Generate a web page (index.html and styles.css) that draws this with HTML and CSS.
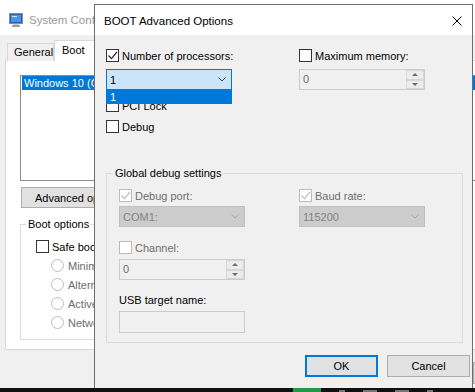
FILE: index.html
```html
<!DOCTYPE html>
<html lang="en">
<head>
    <meta charset="UTF-8">
    <meta name="viewport" content="width=device-width, initial-scale=1.0">
    <title>BOOT Advanced Options</title>
    <link rel="stylesheet" href="styles.css">
</head>
<body>
    <div class="desktop">
        <!-- System Configuration window, behind the dialog -->
        <div class="sysconfig">
            <div class="sc-title">
                <svg class="sc-icon" width="16" height="16" viewBox="0 0 16 16">
                    <rect x="1.5" y="1.5" width="13" height="10" fill="#1f5fc4" stroke="#8c8c8c"/>
                    <rect x="3" y="3" width="10" height="7" fill="#4a94ea"/>
                    <path d="M4 4.5h5" stroke="#cfe4fb" stroke-width="1"/>
                    <path d="M5 12.5h6l1.5 2.5h-9z" fill="#9c9c9c"/>
                </svg>
                <span>System Configuration</span>
            </div>
            <div class="sc-tabs">
                <div class="tab">General</div>
                <div class="tab active">Boot</div>
            </div>
            <div class="tab-panel">
                <div class="os-list">
                    <div class="os-item">Windows 10 (C:\WINDOWS) : Current OS; Default OS</div>
                </div>
                <button class="btn adv-btn">Advanced options...</button>
                <fieldset class="group boot-opts">
                    <legend>Boot options</legend>
                    <label class="check"><span class="box"></span>Safe boot</label>
                    <div class="radios">
                        <label class="radio"><span class="dot"></span>Minimal</label>
                        <label class="radio"><span class="dot"></span>Alternate shell</label>
                        <label class="radio"><span class="dot"></span>Active Directory repair</label>
                        <label class="radio"><span class="dot"></span>Network</label>
                    </div>
                </fieldset>
            </div>
            <div class="sc-footer">
                <button class="btn ghost"></button>
            </div>
        </div>

        <!-- BOOT Advanced Options dialog -->
        <div class="dialog">
            <div class="dlg-title">
                <span>BOOT Advanced Options</span>
                <svg class="close" width="10" height="10" viewBox="0 0 10 10">
                    <path d="M0.5 0.5l9 9M9.5 0.5l-9 9" stroke="#000" stroke-width="1"/>
                </svg>
            </div>
            <div class="dlg-body">
                <div class="cols">
                    <div class="col">
                        <label class="check">
                            <span class="box"><svg width="11" height="11" viewBox="0 0 11 11"><path d="M1.5 5.5l3 3.2L10 1.8" fill="none" stroke="currentColor" stroke-width="1.2"/></svg></span>
                            Number of processors:
                        </label>
                        <div class="select-wrap">
                            <div class="select open">
                                <span>1</span>
                                <svg width="8" height="5" viewBox="0 0 8 5"><path d="M0.5 0.5L4 4 7.5 0.5" fill="none" stroke="#444" stroke-width="1"/></svg>
                            </div>
                            <div class="dropdown-list">
                                <div class="dd-item">1</div>
                            </div>
                        </div>
                        <label class="check pci"><span class="box"></span>PCI Lock</label>
                        <label class="check debug"><span class="box"></span>Debug</label>
                    </div>
                    <div class="col">
                        <label class="check"><span class="box"></span>Maximum memory:</label>
                        <div class="spin top-spin">
                            <span class="spin-val">0</span>
                            <span class="spin-btns"><span class="up"></span><span class="down"></span></span>
                        </div>
                    </div>
                </div>

                <fieldset class="group debug-group">
                    <legend>Global debug settings</legend>
                    <div class="cols inner">
                        <div class="col">
                            <label class="check disabled">
                                <span class="box"><svg width="11" height="11" viewBox="0 0 11 11"><path d="M1.5 5.5l3 3.2L10 1.8" fill="none" stroke="currentColor" stroke-width="1.2"/></svg></span>
                                Debug port:
                            </label>
                            <div class="select disabled">
                                <span>COM1:</span>
                                <svg width="8" height="5" viewBox="0 0 8 5"><path d="M0.5 0.5L4 4 7.5 0.5" fill="none" stroke="#a6a6a6" stroke-width="1"/></svg>
                            </div>
                            <label class="check disabled channel"><span class="box"></span>Channel:</label>
                            <div class="spin">
                                <span class="spin-val">0</span>
                                <span class="spin-btns"><span class="up"></span><span class="down"></span></span>
                            </div>
                            <div class="field-label">USB target name:</div>
                            <div class="textbox"></div>
                        </div>
                        <div class="col">
                            <label class="check disabled">
                                <span class="box"><svg width="11" height="11" viewBox="0 0 11 11"><path d="M1.5 5.5l3 3.2L10 1.8" fill="none" stroke="currentColor" stroke-width="1.2"/></svg></span>
                                Baud rate:
                            </label>
                            <div class="select disabled">
                                <span>115200</span>
                                <svg width="8" height="5" viewBox="0 0 8 5"><path d="M0.5 0.5L4 4 7.5 0.5" fill="none" stroke="#a6a6a6" stroke-width="1"/></svg>
                            </div>
                        </div>
                    </div>
                </fieldset>

                <div class="dlg-buttons">
                    <button class="btn default">OK</button>
                    <button class="btn cancel">Cancel</button>
                </div>
            </div>
        </div>

        <div class="taskbar">
            <span class="tb-app"></span>
            <span class="tb-bit"></span>
            <span class="tb-bit wide"></span>
            <span class="tb-bit wide"></span>
            <span class="tb-bit"></span>
        </div>
    </div>
</body>
</html>
```

FILE: styles.css
```css
* {
    margin: 0;
    padding: 0;
    box-sizing: border-box;
}

body {
    font-family: 'Liberation Sans', Arial, sans-serif;
    font-size: 11px;
    color: #000;
    background-color: #101010;
}

.desktop {
    position: relative;
    width: 475px;
    height: 392px;
    overflow: hidden;
    background-color: #101010;
}

/* ---------- background window ---------- */

.sysconfig {
    position: absolute;
    left: 0;
    top: 0;
    width: 560px;
    height: 388px;
    background-color: #f0f0f0;
    z-index: 0;
}

.sc-title {
    height: 35px;
    background-color: #fff;
    display: flex;
    align-items: center;
    gap: 5px;
    padding: 4px 0 0 8px;
    color: #999;
    font-size: 11.5px;
    white-space: nowrap;
}

.sc-tabs {
    display: flex;
    align-items: flex-end;
    height: 26px;
    padding: 5px 0 0 7px;
    position: relative;
    z-index: 1;
}

.tab {
    height: 18px;
    line-height: 16px;
    padding: 0 6px;
    border: 1px solid #d9d9d9;
    border-bottom: none;
    background-color: #f0f0f0;
}

.tab:first-child {
    width: 47px;
}

.tab.active {
    height: 21px;
    line-height: 18px;
    padding-left: 7px;
    width: 46px;
    background-color: #fff;
}

.tab-panel {
    margin: -1px 0 0 5px;
    height: 290px;
    border: 1px solid #d9d9d9;
    background-color: #fff;
    padding: 14px 0 0 14px;
}

.os-list {
    height: 106px;
    border: 1px solid #8c8c8c;
    padding: 0 1px;
}

.os-item {
    height: 14px;
    line-height: 14px;
    padding-left: 2px;
    background-color: #0078d7;
    color: #fff;
    white-space: nowrap;
}

.btn {
    font: inherit;
    color: #000;
    height: 22px;
    border: 1px solid #adadad;
    background-color: #e1e1e1;
}

.adv-btn {
    display: block;
    height: 21px;
    width: 124px;
    margin: 6px 0 0 1px;
    padding-left: 13px;
    text-align: left;
}

.group {
    border: 1px solid #dcdcdc;
    min-width: 0;
}

.group legend {
    padding: 0 2px;
    line-height: 14px;
}

.boot-opts {
    width: 260px;
    margin-top: 9px;
    padding: 9px 0 10px 15px;
}

.boot-opts legend {
    margin-left: -10px;
}

.radios {
    display: flex;
    flex-direction: column;
    gap: 6px;
    margin: 6px 0 0 15px;
}

.radio {
    display: flex;
    align-items: center;
    gap: 4px;
    height: 13px;
    color: #6d6d6d;
    white-space: nowrap;
}

.dot {
    width: 13px;
    height: 13px;
    border: 1px solid #bcbcbc;
    border-radius: 50%;
    background-color: #fff;
    flex: none;
}

.sc-footer {
    display: flex;
    justify-content: flex-end;
    padding: 12px 7px 0 0;
}

.sc-footer .btn.ghost {
    width: 80px;
}

/* ---------- shared controls ---------- */

.check {
    display: flex;
    align-items: center;
    gap: 3px;
    height: 13px;
    white-space: nowrap;
}

.box {
    width: 13px;
    height: 13px;
    flex: none;
    border: 1px solid #333;
    background-color: #fff;
    color: #222;
    display: flex;
}

.check.disabled {
    color: #6d6d6d;
}

.check.disabled .box {
    border-color: #bcbcbc;
    color: #bcbcbc;
}

.select {
    height: 21px;
    border: 1px solid #adadad;
    background-color: #e5e5e5;
    display: flex;
    align-items: center;
    justify-content: space-between;
    padding: 0 5px 0 3px;
}

.select.open {
    border-color: #0078d7;
    background-color: #cce4f7;
}

.select.disabled {
    border-color: #bfbfbf;
    background-color: #cccccc;
    color: #838383;
}

.spin {
    height: 21px;
    display: flex;
    border: 1px solid #cccccc;
    background-color: #f0f0f0;
    color: #6d6d6d;
}

.spin-val {
    flex: 1;
    padding-left: 3px;
    line-height: 19px;
}

.spin-btns {
    width: 18px;
    display: flex;
    flex-direction: column;
}

.spin-btns span {
    flex: 1;
    border: 1px solid #d6d6d6;
    background-color: #ececec;
    display: flex;
    align-items: center;
    justify-content: center;
}

.spin-btns span::before {
    content: "";
    border-left: 3px solid transparent;
    border-right: 3px solid transparent;
}

.spin-btns .up::before {
    border-bottom: 3px solid #6d6d6d;
}

.spin-btns .down::before {
    border-top: 3px solid #6d6d6d;
}

.textbox {
    height: 22px;
    border: 1px solid #cccccc;
    background-color: #f0f0f0;
}

/* ---------- dialog ---------- */

.dialog {
    position: absolute;
    left: 94px;
    top: 4px;
    width: 379px;
    height: 385px;
    border: 1px solid #6e6e6e;
    background-color: #f0f0f0;
    z-index: 1;
}

.dlg-title {
    height: 30px;
    background-color: #fff;
    display: flex;
    align-items: center;
    justify-content: space-between;
    padding: 1px 10px 0 9px;
    font-size: 11.5px;
}

.dlg-body {
    padding: 14px 2px 0 11px;
}

.cols {
    display: grid;
    grid-template-columns: 126px 126px;
    column-gap: 67px;
}

.col {
    display: flex;
    flex-direction: column;
}

.select-wrap {
    position: relative;
    margin-top: 7px;
}

.dropdown-list {
    position: absolute;
    left: 0;
    right: 0;
    top: 100%;
    height: 14px;
    background-color: #0078d7;
    color: #fff;
    z-index: 2;
}

.dd-item {
    line-height: 14px;
    padding-left: 4px;
}

.check.pci {
    margin-top: 9px;
}

.check.debug {
    margin-top: 8px;
}

.top-spin {
    margin-top: 7px;
}

.debug-group {
    width: 357px;
    margin-top: 33px;
    padding: 9px 12px 9px 12px;
}

.debug-group legend {
    margin-left: -6px;
}

.cols.inner {
    column-gap: 54px;
}

.inner .select {
    margin-top: 4px;
}

.check.channel {
    margin-top: 14px;
}

.inner .spin {
    margin-top: 5px;
}

.field-label {
    margin-top: 13px;
    line-height: 14px;
}

.inner .textbox {
    margin-top: 4px;
}

.dlg-buttons {
    display: flex;
    justify-content: flex-end;
    gap: 9px;
    margin-top: 12px;
}

.dlg-buttons .btn {
    width: 73px;
}

.dlg-buttons .btn.default {
    border: 2px solid #0078d7;
}

.dlg-buttons .btn.cancel {
    width: 83px;
}

/* ---------- taskbar strip ---------- */

.taskbar {
    position: absolute;
    left: 0;
    right: 0;
    bottom: 0;
    height: 4px;
    background-color: #101010;
    display: flex;
    align-items: flex-end;
    gap: 18px;
    padding-left: 293px;
    z-index: 3;
}

.tb-app {
    width: 28px;
    height: 4px;
    background-color: #1f9a40;
}

.tb-bit {
    width: 6px;
    height: 2px;
    background-color: #777;
}

.tb-bit.wide {
    width: 14px;
}
```
